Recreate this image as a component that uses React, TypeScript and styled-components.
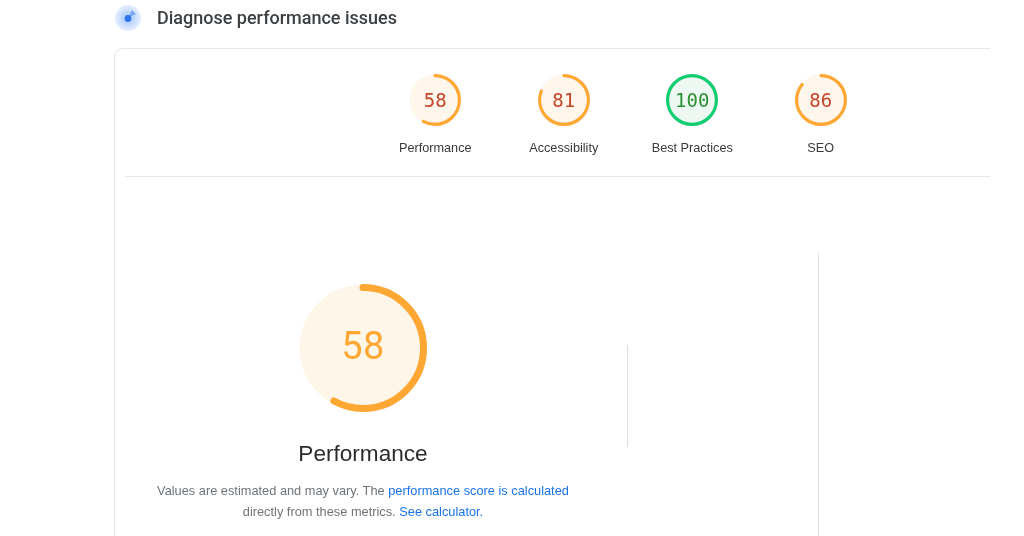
import * as React from 'react';
import styled, { createGlobalStyle } from 'styled-components';

const GlobalStyle = createGlobalStyle`
  html, body {
    margin: 0;
    padding: 0;
    height: 100%;
    background: #fff;
    overflow: hidden;
  }
`;

const Page = styled.div`
  width: 1024px;
  height: 536px;
  overflow: hidden;
  padding-left: 114px;
  box-sizing: border-box;
  filter: blur(0.3px);
`;

const Header = styled.header`
  height: 48px;
  display: flex;
  align-items: flex-start;
  gap: 15px;
  padding-top: 4px;
  box-sizing: border-box;
`;

const Title = styled.h1`
  margin: 1px 0 0;
  font: 500 18px/26px Roboto, sans-serif;
  color: #3c4043;
`;

const Card = styled.section`
  width: 876px;
  height: 488px;
  box-sizing: border-box;
  padding-left: 10px;
  border: 1px solid #e6e6e6;
  border-width: 1px 0 0 1px;
  border-top-left-radius: 9px;
`;

const ScoreRow = styled.div`
  height: 128px;
  box-sizing: border-box;
  padding: 25px 0 0 246px;
  display: flex;
  border-bottom: 1px solid #e6e6e6;
`;

const ScoreItem = styled.div`
  width: 128.5px;
  display: flex;
  flex-direction: column;
  align-items: center;
  gap: 14px;
`;

const GaugeBox = styled.div<{ $size: number }>`
  width: ${(p) => p.$size}px;
  height: ${(p) => p.$size}px;
  display: grid;
  place-items: center;
  & > * {
    grid-area: 1 / 1;
  }
`;

const GaugeValue = styled.span<{ $color: string }>`
  font: 400 19px/1 'DejaVu Sans Mono', monospace;
  color: ${(p) => p.$color};
`;

const BigValue = styled.span`
  font: 400 38px/1 Roboto, sans-serif;
  color: #ffa733;
  letter-spacing: 0.5px;
  padding-bottom: 5px;
`;

const ScoreLabel = styled.span`
  font: 400 12.7px/16px 'Liberation Sans', sans-serif;
  color: #3a3a3a;
`;

const Body = styled.div`
  display: flex;
  align-items: flex-start;
  padding-top: 76px;
`;

const Overview = styled.div`
  width: 693px;
  height: 283px;
  display: flex;
  align-items: flex-start;
  gap: 26px;
  border-right: 1px solid #e0e0e0;
`;

const OverviewMain = styled.div`
  width: 476px;
  padding-top: 31px;
  display: flex;
  flex-direction: column;
  align-items: center;
`;

const ShortRule = styled.div`
  width: 1px;
  height: 102px;
  margin-top: 92px;
  background: #dedede;
`;

const OverviewTitle = styled.h2`
  margin: 27px 0 0;
  font: 400 22.6px/30px 'Liberation Sans', sans-serif;
  color: #2b2b2b;
`;

const Note = styled.p`
  margin: 11px 0 0;
  font: 400 12.8px/21px 'Liberation Sans', sans-serif;
  color: #70757a;
  text-align: center;
  white-space: nowrap;
`;

const NoteLink = styled.a`
  color: #1a73e8;
  text-decoration: none;
`;

const RadarIcon = () => (
  <svg width="28" height="28" viewBox="0 0 28 28" aria-hidden="true">
    <defs>
      <radialGradient id="radar-glow">
        <stop offset="0%" stopColor="#a8c7fa" />
        <stop offset="50%" stopColor="#c2d8fc" />
        <stop offset="70%" stopColor="#d3e3fd" />
        <stop offset="100%" stopColor="#e6effe" />
      </radialGradient>
    </defs>
    <circle cx="14" cy="14" r="13" fill="url(#radar-glow)" />
    <path d="M14 14 L18 6 L22 10 Z" fill="#7aa7f5" />
    <circle cx="14" cy="14.5" r="3.4" fill="#2f74ea" />
  </svg>
);

type GaugeProps = {
  score: number;
  size: number;
  stroke: number;
  color: string;
  fill: string;
  children: React.ReactNode;
};

const Gauge = ({ score, size, stroke, color, fill, children }: GaugeProps) => {
  const r = (size - stroke) / 2;
  const c = size / 2;
  const full = score >= 100;
  return (
    <GaugeBox $size={size}>
      <svg width={size} height={size} viewBox={`0 0 ${size} ${size}`} aria-hidden="true">
        <circle cx={c} cy={c} r={c - 0.5} fill={fill} />
        <circle
          cx={c}
          cy={c}
          r={r}
          fill="none"
          stroke={color}
          strokeWidth={stroke}
          strokeLinecap={full ? 'butt' : 'round'}
          pathLength={100}
          strokeDasharray={`${score} 100`}
          transform={`rotate(-90 ${c} ${c})`}
        />
      </svg>
      {children}
    </GaugeBox>
  );
};

const scores = [
  { label: 'Performance', score: 58, shown: 58 },
  { label: 'Accessibility', score: 81, shown: 81 },
  { label: 'Best Practices', score: 100, shown: 100 },
  { label: 'SEO', score: 86, shown: 86 },
];

const App = () => (
  <Page>
    <GlobalStyle />
    <Header>
      <RadarIcon />
      <Title>Diagnose performance issues</Title>
    </Header>
    <Card>
      <ScoreRow>
        {scores.map((s) => {
          const good = s.score >= 90;
          return (
            <ScoreItem key={s.label}>
              <Gauge
                score={s.score}
                size={52}
                stroke={3.2}
                color={good ? '#12cc70' : '#ffa733'}
                fill={good ? '#ecf8f1' : '#fff6ec'}
              >
                <GaugeValue $color={good ? '#2a8f35' : '#c4472a'}>{s.shown}</GaugeValue>
              </Gauge>
              <ScoreLabel>{s.label}</ScoreLabel>
            </ScoreItem>
          );
        })}
      </ScoreRow>
      <Body>
        <Overview>
          <OverviewMain>
            <Gauge score={58} size={128} stroke={7} color="#ffa733" fill="#fff6ea">
              <BigValue>58</BigValue>
            </Gauge>
            <OverviewTitle>Performance</OverviewTitle>
            <Note>
              Values are estimated and may vary. The{' '}
              <NoteLink href="#">performance score is calculated</NoteLink>
              <br />
              directly from these metrics. <NoteLink href="#">See calculator.</NoteLink>
            </Note>
          </OverviewMain>
          <ShortRule />
        </Overview>
      </Body>
    </Card>
  </Page>
);

export default App;
